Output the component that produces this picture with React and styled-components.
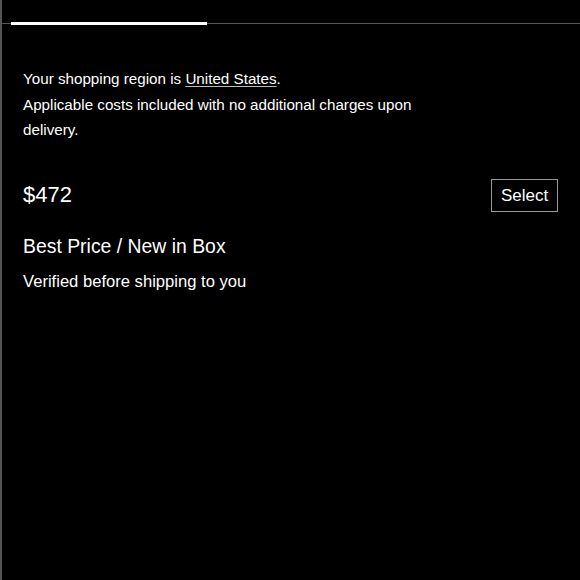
import React from 'react';
import styled, { createGlobalStyle } from 'styled-components';

const GlobalStyle = createGlobalStyle`
  html, body {
    margin: 0;
    padding: 0;
    background: #000;
  }
  body {
    font-family: "Liberation Sans", Arial, sans-serif;
    color: #fff;
  }
`;

const Panel = styled.div`
  width: 580px;
  height: 580px;
  box-sizing: border-box;
  border-left: 2px solid #555;
  background: #000;
  display: flex;
  flex-direction: column;
`;

const Track = styled.div`
  margin-top: 23px;
  height: 1px;
  background: #555;
  display: flex;
  align-items: center;
  padding-left: 9px;
`;

const Indicator = styled.div`
  width: 196px;
  height: 3px;
  background: #fff;
`;

const Content = styled.div`
  padding: 42px 22px 0 21px;
  display: flex;
  flex-direction: column;
`;

const Notice = styled.p`
  margin: 0;
  width: 420px;
  font-size: 15.2px;
  line-height: 25.5px;
  color: #fff;
`;

const RegionLink = styled.a`
  color: #fff;
  text-decoration: underline;
  text-decoration-color: #bbb;
  text-underline-offset: 2px;
`;

const OfferRow = styled.div`
  margin-top: 36px;
  display: flex;
  align-items: center;
  justify-content: space-between;
`;

const Price = styled.div`
  font-size: 22px;
`;

const SelectButton = styled.button`
  background: #000;
  color: #fff;
  border: 1px solid #999;
  font-family: inherit;
  font-size: 17px;
  width: 67px;
  height: 33px;
  padding: 1px 0 0;
`;

const Condition = styled.div`
  margin-top: 23px;
  font-size: 19.4px;
`;

const Note = styled.div`
  margin-top: 14px;
  font-size: 16.6px;
`;

export default function App() {
  return (
    <>
      <GlobalStyle />
      <Panel>
        <Track>
          <Indicator />
        </Track>
        <Content>
          <Notice>
            Your shopping region is <RegionLink>United States</RegionLink>.
            <br />
            Applicable costs included with no additional charges upon delivery.
          </Notice>
          <OfferRow>
            <Price>$472</Price>
            <SelectButton>Select</SelectButton>
          </OfferRow>
          <Condition>Best Price / New in Box</Condition>
          <Note>Verified before shipping to you</Note>
        </Content>
      </Panel>
    </>
  );
}
